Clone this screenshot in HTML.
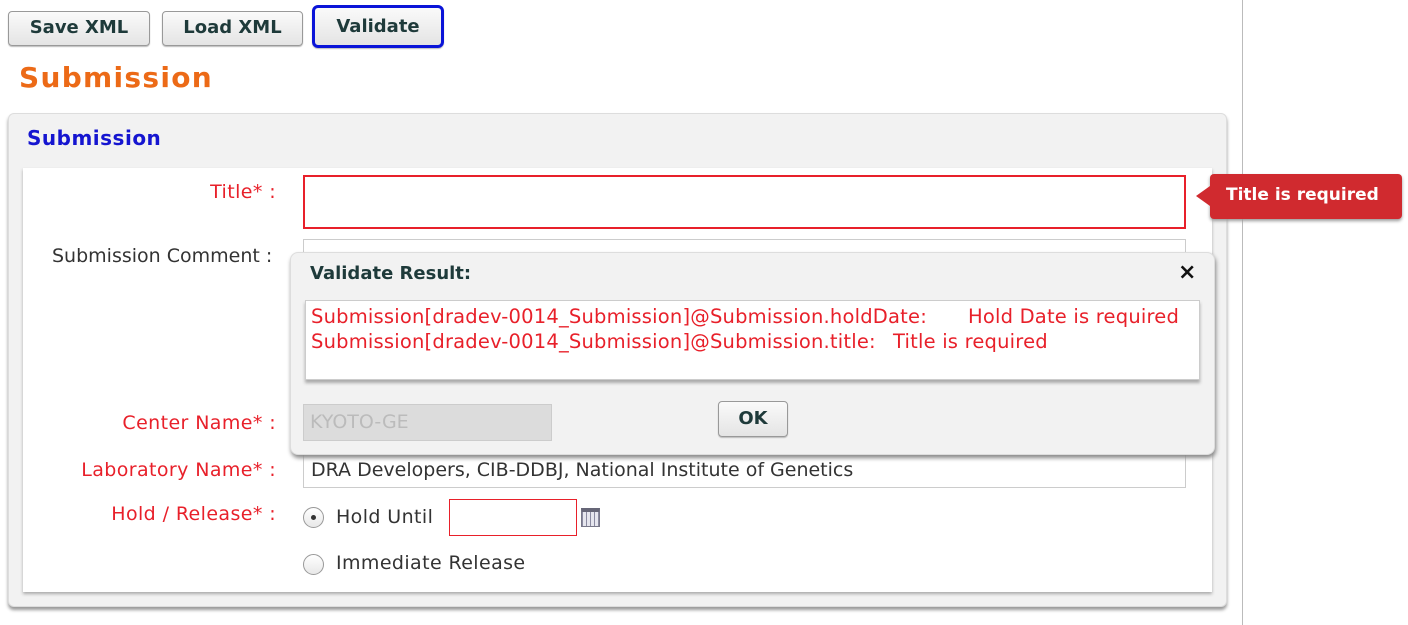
<!DOCTYPE html>
<html><head><meta charset="utf-8"><style>
*{box-sizing:border-box;margin:0;padding:0}
body{width:1408px;height:625px;background:#fff;position:relative;overflow:hidden;font-family:"DejaVu Sans","Liberation Sans",sans-serif;font-size:19px;letter-spacing:0.4px;color:#333}
.a{position:absolute;white-space:nowrap}
.btn{position:absolute;top:11px;height:35px;border:1px solid #999;border-radius:4px;background:linear-gradient(#fafafa,#e4e4e4);font-weight:bold;font-size:18px;letter-spacing:0;color:#1e3a3a;text-align:center;line-height:32px;box-shadow:0 1px 1px #bbb}
.lbl{position:absolute;right:1132px;color:#e8202a;white-space:nowrap;text-align:right}
.inp{position:absolute;border:1px solid #ccc;background:#fff}
.red{color:#e8202a}
</style></head><body>
<div class="btn" style="left:8px;width:142px">Save XML</div>
<div class="btn" style="left:162px;width:141px">Load XML</div>
<div class="btn" style="left:312px;width:132px;border:3px solid #0a14d8;top:5px;height:43px;line-height:37px;border-radius:6px">Validate</div>
<div class="a" style="left:19px;top:61px;font-size:28px;font-weight:bold;color:#ec6a17;letter-spacing:1.3px">Submission</div>
<div class="a" style="left:1242px;top:0;width:1px;height:625px;background:#bbb"></div>
<div class="a" style="left:8px;top:113px;width:1219px;height:494px;background:#f2f2f2;border:1px solid #ddd;border-radius:6px;box-shadow:0 3px 3px #999"></div>
<div class="a" style="left:27px;top:126px;font-size:20px;font-weight:bold;color:#1515d0;letter-spacing:0.5px">Submission</div>
<div class="a" style="left:23px;top:168px;width:1189px;height:424px;background:#fff;box-shadow:0 2px 3px #aaa"></div>
<div class="lbl" style="top:181px">Title* :</div>
<div class="inp" style="left:303px;top:175px;width:883px;height:54px;border:2px solid #e8202a"></div>
<div class="a" style="left:1210px;top:174px;width:192px;height:45px;background:#d02a2f;border-radius:4px;color:#fff;font-weight:bold;font-size:17px;letter-spacing:0;line-height:43px;padding-left:16px;box-shadow:0 2px 3px #999">Title is required</div>
<div class="a" style="left:1196px;top:186px;width:0;height:0;border-top:10px solid transparent;border-bottom:10px solid transparent;border-right:14px solid #d02a2f"></div>
<div class="a" style="left:52px;top:245px;color:#333;letter-spacing:0">Submission Comment :</div>
<div class="inp" style="left:303px;top:239px;width:883px;height:156px"></div>
<div class="lbl" style="top:412px">Center Name* :</div>
<div class="lbl" style="top:459px">Laboratory Name* :</div>
<div class="inp" style="left:303px;top:452px;width:883px;height:36px"></div>
<div class="a" style="left:311px;top:459px;color:#333;letter-spacing:0">DRA Developers, CIB-DDBJ, National Institute of Genetics</div>
<div class="a" style="left:303px;top:507px;width:21px;height:21px;border:1px solid #999;border-radius:50%;background:linear-gradient(#fff,#e8e8e8)"><div style="position:absolute;left:7px;top:7px;width:5px;height:5px;border-radius:50%;background:#333"></div></div>
<div class="a" style="left:336px;top:506px">Hold Until</div>
<div class="lbl" style="top:503px">Hold / Release* :</div>
<div class="inp" style="left:449px;top:499px;width:128px;height:37px;border:1px solid #e8202a"></div>
<div class="a" style="left:581px;top:508px;width:19px;height:19px;background:repeating-linear-gradient(90deg,#8a8aa0 0 1px,#e6e6ee 1px 4px),#ccd;border:1px solid #778;border-top:4px solid #667"></div>
<div class="a" style="left:303px;top:554px;width:21px;height:21px;border:1px solid #999;border-radius:50%;background:linear-gradient(#fff,#e8e8e8)"></div>
<div class="a" style="left:336px;top:552px">Immediate Release</div>
<div class="a" style="left:290px;top:252px;width:925px;height:203px;background:#f2f2f2;border:1px solid #ddd;border-radius:8px;box-shadow:1px 3px 4px #888"></div>
<div class="a" style="left:310px;top:263px;font-weight:bold;font-size:18px;letter-spacing:0;color:#1e3a3a">Validate Result:</div>
<div class="a" style="left:1178px;top:260px;font-size:22px;font-weight:bold;color:#111">×</div>
<div class="a" style="left:305px;top:300px;width:895px;height:80px;background:#fff;border:1px solid #ccc;box-shadow:0 3px 3px #aaa"></div>
<div class="a red" style="left:311px;top:305px;font-size:19.5px;letter-spacing:0.2px">Submission[dradev-0014_Submission]@Submission.holdDate:</div>
<div class="a red" style="left:968px;top:305px;font-size:19.5px;letter-spacing:0.2px">Hold Date is required</div>
<div class="a red" style="left:311px;top:330px;font-size:19.5px;letter-spacing:0.2px">Submission[dradev-0014_Submission]@Submission.title:</div>
<div class="a red" style="left:893px;top:330px;font-size:19.5px;letter-spacing:0.2px">Title is required</div>
<div class="a" style="left:303px;top:404px;width:249px;height:37px;background:#dcdcdc;border:1px solid #ccc;color:#bbb;padding:6px 0 0 6px;letter-spacing:0">KYOTO-GE</div>
<div class="btn" style="left:718px;top:401px;width:70px;height:36px;line-height:33px">OK</div>
</body></html>
